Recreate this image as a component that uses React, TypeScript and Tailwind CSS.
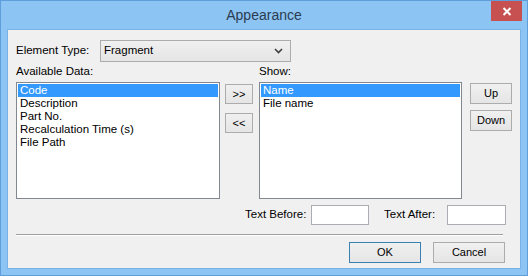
import React from "react";

const font = { fontFamily: '"Liberation Sans", Arial, sans-serif' };

function Btn({ children, w, h, primary }: { children: React.ReactNode; w: string; h: string; primary?: boolean }) {
  return (
    <div
      className={`${w} ${h} flex items-center justify-center border ${primary ? "border-[#3c7fb1]" : "border-[#acacac]"} bg-gradient-to-b from-[#f0f0f0] to-[#e5e5e5] text-[11px] text-black`}
    >
      {children}
    </div>
  );
}

function ListBox({ items, w }: { items: string[]; w: string }) {
  return (
    <div className={`${w} h-[117px] border border-[#828790] bg-white p-px flex flex-col`}>
      {items.map((it, i) => (
        <div
          key={it}
          className={`h-[13px] leading-[13px] pl-[2px] text-[11.5px] ${i === 0 ? "bg-[#3399ff] text-white" : "text-black"}`}
        >
          {it}
        </div>
      ))}
    </div>
  );
}

export default function App() {
  return (
    <div style={font} className="w-[528px] h-[276px] bg-[#8cc4f4] border border-[#5f9edb] flex flex-col">
      <div className="h-[28px] relative flex items-center justify-center">
        <span className="text-[14px] text-[#2b3d52] mt-[1px]">Appearance</span>
        <div className="absolute right-[5px] top-0 w-[31px] h-[20px] bg-[#c75050] flex items-center justify-center">
          <svg width="10" height="9" viewBox="0 0 10 9">
            <path d="M1.5 1 L8.5 8 M8.5 1 L1.5 8" stroke="white" strokeWidth="2" />
          </svg>
        </div>
      </div>
      <div className="mx-[6px] mb-[6px] flex-1 bg-[#f0f0f0] border border-[#79b2e6] px-[8px] pt-[10px] flex flex-col">
        <div className="flex items-center h-[22px]">
          <span className="w-[84px] text-[11.5px] text-black">Element Type:</span>
          <div className="w-[191px] h-[22px] border border-[#acacac] bg-gradient-to-b from-[#f0f0f0] to-[#e5e5e5] flex items-center justify-between pl-[3px] pr-[7px]">
            <span className="text-[11.5px] text-black">Fragment</span>
            <svg width="9" height="6" viewBox="0 0 9 6">
              <path d="M1 1 L4.5 4.5 L8 1" stroke="#404040" strokeWidth="1.6" fill="none" />
            </svg>
          </div>
        </div>
        <div className="flex mt-[4px] h-[14px] items-end">
          <span className="w-[243px] text-[11.5px] text-black">Available Data:</span>
          <span className="text-[11.5px] text-black">Show:</span>
        </div>
        <div className="flex mt-[2px]">
          <ListBox w="w-[204px]" items={["Code", "Description", "Part No.", "Recalculation Time (s)", "File Path"]} />
          <div className="flex flex-col ml-[5px] mt-[2px] gap-[9px]">
            <Btn w="w-[28px]" h="h-[20px]">&gt;&gt;</Btn>
            <Btn w="w-[28px]" h="h-[20px]">&lt;&lt;</Btn>
          </div>
          <div className="ml-[6px]">
            <ListBox w="w-[203px]" items={["Name", "File name"]} />
          </div>
          <div className="flex flex-col ml-[8px] mt-[1px] gap-[6px]">
            <Btn w="w-[42px]" h="h-[21px]">Up</Btn>
            <Btn w="w-[42px]" h="h-[21px]">Down</Btn>
          </div>
        </div>
        <div className="flex items-center mt-[6px] h-[20px]">
          <span className="ml-[229px] w-[66px] text-[11.5px] text-black">Text Before:</span>
          <div className="w-[58px] h-[20px] bg-white border border-[#abadb3]" />
          <span className="ml-[15px] w-[63px] text-[11.5px] text-black">Text After:</span>
          <div className="w-[59px] h-[20px] bg-white border border-[#abadb3]" />
        </div>
        <div className="mt-[9px] w-[487px] h-[1px] bg-[#a0a0a0] border-b border-white box-content" />
        <div className="flex mt-[6px]">
          <div className="ml-[333px]">
            <Btn w="w-[72px]" h="h-[21px]" primary>OK</Btn>
          </div>
          <div className="ml-[12px]">
            <Btn w="w-[72px]" h="h-[21px]">Cancel</Btn>
          </div>
        </div>
      </div>
    </div>
  );
}
